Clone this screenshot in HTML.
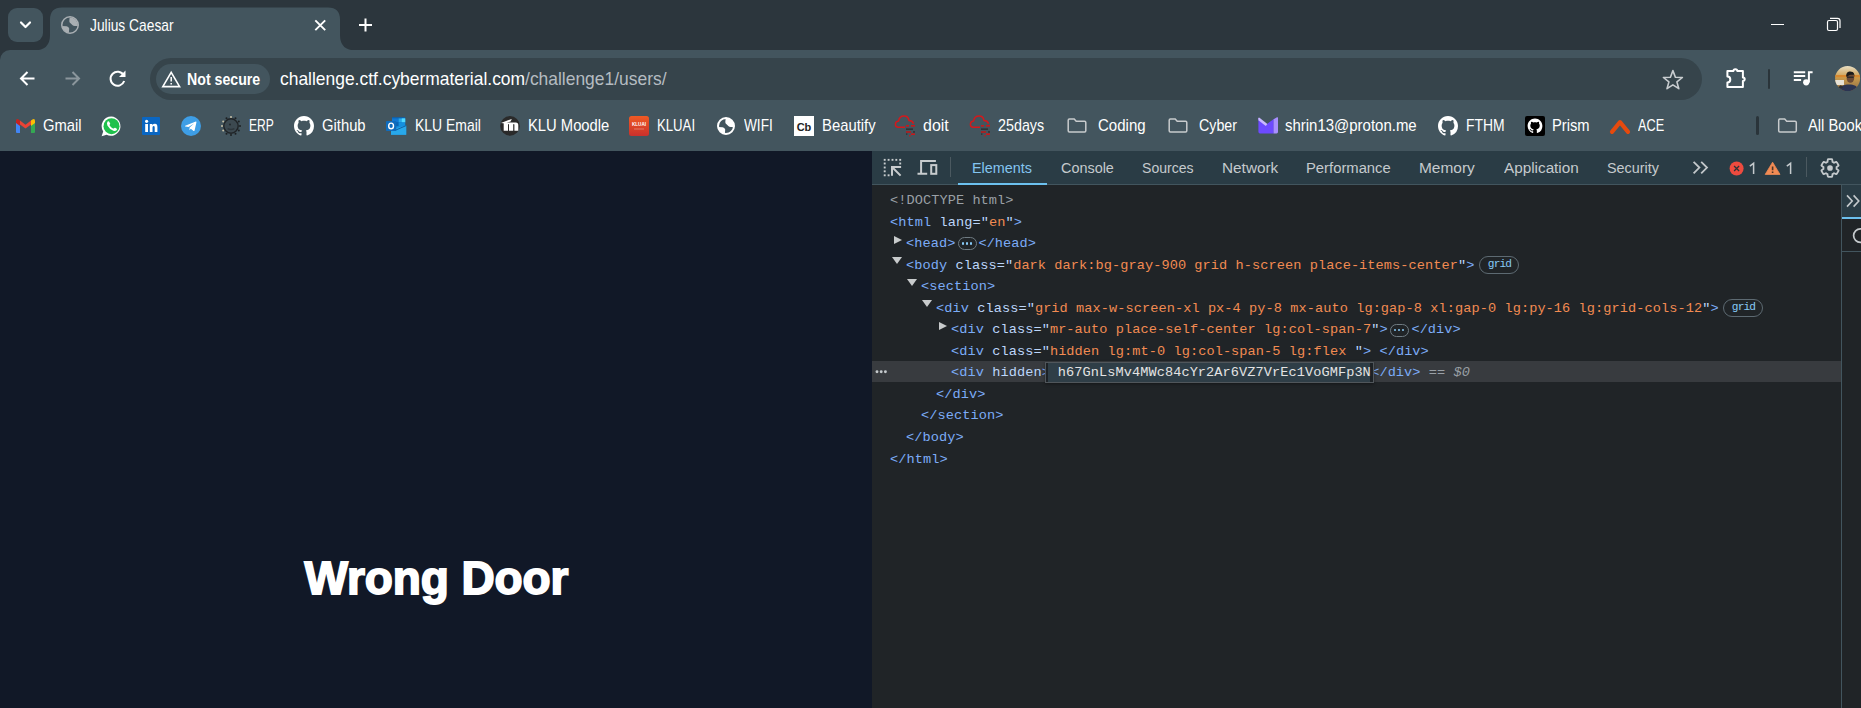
<!DOCTYPE html>
<html><head><meta charset="utf-8"><title>Julius Caesar</title>
<style>
*{box-sizing:border-box;margin:0;padding:0}
html,body{width:1861px;height:708px;overflow:hidden}
body{position:relative;background:#2c363d;font-family:"Liberation Sans",sans-serif;color:#fff}
.a{position:absolute}
.t{position:absolute;white-space:nowrap;line-height:1}
svg{position:absolute;overflow:visible}
.code{position:absolute;font-family:"Liberation Mono",monospace;font-size:13.6px;letter-spacing:0.08px;line-height:21.65px;white-space:pre}
.tg{color:#7cacf8}.an{color:#bcd6fa}.av{color:#f28b52}.gr{color:#9aa0a6}.tx{color:#e3e3e3}
.tri{position:absolute;width:0;height:0}
.tr{border-left:8.3px solid #c8cbcc;border-top:4.9px solid transparent;border-bottom:4.9px solid transparent}
.td{border-top:7.2px solid #c8cbcc;border-left:5px solid transparent;border-right:5px solid transparent}
.badge{position:absolute;height:18px;border:1px solid #5d6a72;border-radius:9px;color:#87c9f5;font-family:"Liberation Mono",monospace;font-size:11.2px;letter-spacing:-0.9px;line-height:15px;text-align:center;padding-left:1px}
.ell{position:absolute;width:19px;height:13px;border:1px solid #6f7b82;border-radius:7px}
.ell i{position:absolute;top:4px;width:2.4px;height:2.4px;border-radius:50%;background:#87c9f5}
</style></head><body>
<div class="a" style="left:8px;top:8px;width:35px;height:34px;background:#43555e;border-radius:9px"></div>
<svg style="left:0;top:0" width="40" height="40"><polyline points="21,22.5 25.5,27 30,22.5" fill="none" stroke="#fff" stroke-width="2.2" stroke-linecap="round" stroke-linejoin="round"/></svg>
<svg style="left:0;top:0" width="400" height="60"><path d="M34 50.5 Q50 50.5 50 35 L50 19.5 Q50 7.4 62 7.4 L328 7.4 Q340 7.4 340 19.5 L340 35 Q340 50.5 356 50.5 Z" fill="#43555e"/></svg>
<svg style="left:61px;top:16px" width="18" height="18" viewBox="0 0 18 18"><circle cx="9" cy="9" r="8.25" fill="#43555e" stroke="#a9afb3" stroke-width="1.5"/><path d="M8.6 1.4 L8.3 5.2 Q8.3 6.8 9.8 7.5 L11.3 8.9 Q12.3 9.9 13.8 9.9 L16.8 9.9 A7.9 7.9 0 0 0 8.6 1.4 Z" fill="#a9afb3"/><path d="M1.2 10.1 L5.6 10.2 Q7.6 10.6 8.2 12.6 L7.9 16.8 A7.9 7.9 0 0 1 1.2 10.1 Z" fill="#a9afb3"/></svg>
<div class="t" style="left:90px;top:17.19px;font-size:16.2px;color:#fff;font-weight:normal;transform:scaleX(0.852);transform-origin:0 0;">Julius Caesar</div>
<svg style="left:0;top:0" width="400" height="40"><path d="M315.3 20.3 L325.2 30.2 M325.2 20.3 L315.3 30.2" stroke="#fff" stroke-width="1.9"/><path d="M365.5 18.5 V31.5 M359 25 H372" stroke="#fff" stroke-width="2"/></svg>
<div class="a" style="left:1771px;top:24px;width:13px;height:1px;background:#fff"></div>
<svg style="left:1820px;top:12px" width="30" height="30"><rect x="7.5" y="8.5" width="10" height="10" rx="1.5" fill="none" stroke="#fff" stroke-width="1.2"/><path d="M10 6.3 H17.5 Q20 6.3 20 8.8 V16" fill="none" stroke="#fff" stroke-width="1.2"/></svg>
<div class="a" style="left:0;top:50px;width:1861px;height:101px;background:#43555e;border-top-left-radius:10px"></div>
<svg style="left:0;top:60px" width="140" height="40"><path d="M34.5 18.5 H21 M27.5 12 L21 18.5 L27.5 25" fill="none" stroke="#fff" stroke-width="2"/><path d="M65.5 18.5 H79 M72.5 12 L79 18.5 L72.5 25" fill="none" stroke="#8b969c" stroke-width="2"/><path d="M123.6 15.2 A7 7 0 1 0 124.2 21" fill="none" stroke="#fff" stroke-width="2"/><path d="M125.5 10.5 V17 H119 Z" fill="#fff"/></svg>
<div class="a" style="left:150px;top:58px;width:1552px;height:42px;background:#36444b;border-radius:21px"></div>
<div class="a" style="left:156px;top:64px;width:114px;height:30px;background:#43555e;border-radius:15px"></div>
<svg style="left:160px;top:68px" width="24" height="22"><path d="M11.2 4.3 L19.6 18.6 H2.8 Z" fill="none" stroke="#fff" stroke-width="1.6" stroke-linejoin="miter"/><path d="M11.2 9 V13.6 M11.2 15 V16.6" stroke="#fff" stroke-width="1.5"/></svg>
<div class="t" style="left:186.6px;top:70.59px;font-size:16.2px;color:#fff;font-weight:bold;transform:scaleX(0.875);transform-origin:0 0;">Not secure</div>
<div class="t" style="left:280px;top:70.14px;font-size:18.5px;color:#fff;font-weight:normal;transform:scaleX(0.942);transform-origin:0 0;">challenge.ctf.cybermaterial.com<span style="color:#b5bcc1">/challenge1/users/</span></div>
<svg style="left:1660px;top:67px" width="26" height="26" viewBox="0 0 26 26"><path d="M12.9 3.6 L15.4 10.2 L22.4 10.5 L16.9 14.9 L18.8 21.7 L12.9 17.8 L7 21.7 L8.9 14.9 L3.4 10.5 L10.4 10.2 Z" fill="none" stroke="#c9cdd0" stroke-width="1.6" stroke-linejoin="round"/></svg>
<svg style="left:1720px;top:62px" width="40" height="34"><path d="M7.4 9.1 H13.4 A1.95 1.95 0 0 1 17.3 9.1 H22.9 V15.4 A1.8 1.8 0 0 1 22.9 19 V25.1 H7.4 V20.4 A2.9 2.9 0 0 0 7.4 14.6 Z" fill="none" stroke="#fff" stroke-width="2" stroke-linejoin="round"/></svg>
<div class="a" style="left:1768px;top:69px;width:2px;height:20px;background:#2a343a;border-radius:1px"></div>
<svg style="left:1780px;top:62px" width="40" height="34"><path d="M13.8 10.2 H25.2 M13.8 14 H25.2 M13.8 18 H21.1" stroke="#fff" stroke-width="2"/><path d="M28.9 20.4 V10.3 H32.6" fill="none" stroke="#fff" stroke-width="2"/><circle cx="26.2" cy="20.3" r="3.1" fill="#fff"/></svg>
<svg style="left:1835px;top:66px" width="26" height="26" viewBox="0 0 26 26"><defs><clipPath id="av"><circle cx="12.6" cy="12.6" r="12.5"/></clipPath><linearGradient id="avg" x1="0" y1="0" x2="0" y2="1"><stop offset="0" stop-color="#e9dfc4"/><stop offset="0.45" stop-color="#c99a4a"/><stop offset="1" stop-color="#8a6a48"/></linearGradient></defs><g clip-path="url(#av)"><rect width="26" height="26" fill="url(#avg)"/><rect y="9" width="26" height="2.2" fill="#d8882e"/><rect x="0" y="14" width="9" height="5" fill="#e8e2d6"/><path d="M3 26 C4 20 9 18.5 14 18.5 C19 18.5 23 20 25 26 Z" fill="#2b3452"/><path d="M2 22 L6 19 L8 22 Z" fill="#303030"/><ellipse cx="15.4" cy="12" rx="3.8" ry="4.8" fill="#6a4a36"/><path d="M11.2 10 C11 5.6 15 4.6 17.6 6 C19.6 7.2 19.6 9.6 19.2 11 L18.6 8.8 C16 8.6 13.6 8.6 11.8 11 Z" fill="#1a1a1a"/><rect x="12" y="10.6" width="6.6" height="1.3" fill="#2a2a2a"/></g></svg>
<svg style="left:16px;top:119px" width="19" height="14" viewBox="0 0 19 14"><path d="M0 2 V13 Q0 14 1 14 H4 V5.5 Z" fill="#4285f4"/><path d="M19 2 V13 Q19 14 18 14 H15 V5.5 Z" fill="#34a853"/><path d="M4 5.5 L9.5 9.6 L15 5.5 V1.6 L9.5 5.7 L4 1.6 Z" fill="#ea4335"/><path d="M15 1.6 L16.4 0.5 Q19 -0.8 19 2 V4 L15 7 Z" fill="#fbbc04"/><path d="M4 1.6 L2.6 0.5 Q0 -0.8 0 2 V4 L4 7 Z" fill="#c5221f"/></svg>
<div class="t" style="left:43px;top:117.37px;font-size:16.1px;color:#fff;font-weight:normal;transform:scaleX(0.9194099378881987);transform-origin:0 0;">Gmail</div>
<svg style="left:101px;top:116px" width="21" height="21" viewBox="0 0 21 21"><path d="M10.4 0.6 A9.6 9.6 0 1 1 5.6 18.8 L0.6 20.2 L2.2 15.4 A9.6 9.6 0 0 1 10.4 0.6 Z" fill="#fff"/><circle cx="10.5" cy="10.2" r="8" fill="#1fc14c"/><path d="M6.6 5.6 Q7.4 5 8 5.4 L9.2 7.6 Q9.4 8.2 8.6 8.8 Q8.4 9.2 9 10 Q10.4 11.8 12 12.4 Q12.6 12.6 13 12.2 Q13.6 11.4 14.2 11.8 L15.8 12.8 Q16.2 13.4 15.6 14.2 Q14.4 15.4 12.4 14.8 Q8.6 13.6 6.4 9.6 Q5.4 7 6.6 5.6 Z" fill="#fff"/></svg>
<svg style="left:142px;top:117px" width="18" height="18" viewBox="0 0 18 18"><rect width="18" height="18" rx="1" fill="#0a66c2"/><rect x="3.2" y="7" width="2.8" height="8" fill="#fff"/><circle cx="4.6" cy="4.3" r="1.6" fill="#fff"/><path d="M7.8 7 H10.4 V8.2 Q11.2 6.8 13 6.8 Q15.4 6.8 15.4 9.8 V15 H12.7 V10.4 Q12.7 9 11.6 9 Q10.5 9 10.5 10.6 V15 H7.8 Z" fill="#fff"/></svg>
<svg style="left:181px;top:116px" width="20" height="20" viewBox="0 0 20 20"><circle cx="10" cy="10" r="10" fill="#3e9ee6"/><path d="M4.2 9.8 L14.8 5.6 Q15.6 5.4 15.4 6.4 L13.6 14.6 Q13.4 15.4 12.6 14.9 L9.8 12.8 L8.4 14.2 L8.6 11.6 L13 7.6 L7.6 11 L4.4 10.6 Q3.6 10.2 4.2 9.8 Z" fill="#fff"/></svg>
<svg style="left:221px;top:116px" width="20" height="20" viewBox="0 0 20 20"><circle cx="10.00" cy="1.00" r="1" fill="#c9c2a8"/><circle cx="14.50" cy="2.21" r="1" fill="#1d2022"/><circle cx="17.79" cy="5.50" r="1" fill="#1d2022"/><circle cx="19.00" cy="10.00" r="1" fill="#1d2022"/><circle cx="17.79" cy="14.50" r="1" fill="#1d2022"/><circle cx="14.50" cy="17.79" r="1" fill="#1d2022"/><circle cx="10.00" cy="19.00" r="1" fill="#1d2022"/><circle cx="5.50" cy="17.79" r="1" fill="#1d2022"/><circle cx="2.21" cy="14.50" r="1" fill="#c9c2a8"/><circle cx="1.00" cy="10.00" r="1" fill="#c9c2a8"/><circle cx="2.21" cy="5.50" r="1" fill="#c9c2a8"/><circle cx="5.50" cy="2.21" r="1" fill="#1d2022"/><circle cx="10" cy="10" r="7.2" fill="#3c4950" stroke="#202427" stroke-width="1.4"/><circle cx="9" cy="8.4" r="1" fill="#22282b"/><path d="M6.6 12.6 Q10 14.4 13.4 12.6" stroke="#2d363b" stroke-width="1.6" fill="none"/></svg>
<div class="t" style="left:249px;top:117.37px;font-size:16.1px;color:#fff;font-weight:normal;transform:scaleX(0.7509);transform-origin:0 0;">ERP</div>
<svg style="left:294px;top:116px" width="20" height="20" viewBox="0 0 16 16"><path d="M8 0C3.58 0 0 3.58 0 8c0 3.54 2.29 6.53 5.47 7.59.4.07.55-.17.55-.38 0-.19-.01-.82-.01-1.49-2.01.37-2.53-.49-2.69-.94-.09-.23-.48-.94-.82-1.13-.28-.15-.68-.52-.01-.53.63-.01 1.08.58 1.23.82.72 1.21 1.87.87 2.33.66.07-.52.28-.87.51-1.07-1.78-.2-3.64-.89-3.64-3.95 0-.87.31-1.59.82-2.15-.08-.2-.36-1.02.08-2.12 0 0 .67-.21 2.2.82.64-.18 1.32-.27 2-.27.68 0 1.36.09 2 .27 1.53-1.04 2.2-.82 2.2-.82.44 1.1.16 1.92.08 2.12.51.56.82 1.27.82 2.15 0 3.07-1.87 3.75-3.65 3.95.29.25.54.73.54 1.48 0 1.07-.01 1.93-.01 2.2 0 .21.15.46.55.38A8.013 8.013 0 0016 8c0-4.42-3.58-8-8-8z" fill="#fff"/></svg>
<div class="t" style="left:322px;top:117.37px;font-size:16.1px;color:#fff;font-weight:normal;transform:scaleX(0.9194099378881987);transform-origin:0 0;">Github</div>
<svg style="left:386px;top:117px" width="21" height="18" viewBox="0 0 21 18"><rect x="6" y="0.2" width="13.2" height="9.4" fill="#0a64b4"/><rect x="6" y="1.4" width="6.6" height="4" fill="#0f78d4"/><rect x="12.6" y="1.4" width="6.6" height="4" fill="#28a8ea"/><rect x="15.8" y="1.4" width="3.4" height="4" fill="#50d9ff"/><rect x="6" y="5.4" width="6.6" height="4.2" fill="#0a64b4"/><rect x="12.6" y="5.4" width="6.6" height="4.2" fill="#1490df"/><path d="M5 9.8 L20.2 8.6 V17.7 H5 Z" fill="#1490df"/><path d="M5 12.6 L20.2 8.6 V17.7 H5 Z" fill="#28a8ea"/><path d="M9 13.4 L20.2 8.6" stroke="#0a4f94" stroke-width="0.8"/><rect x="0" y="3.9" width="10.3" height="10.1" rx="0.8" fill="#0f6cbd"/><ellipse cx="5.1" cy="8.9" rx="2.4" ry="2.8" fill="none" stroke="#fff" stroke-width="1.4"/></svg>
<div class="t" style="left:415px;top:117.37px;font-size:16.1px;color:#fff;font-weight:normal;transform:scaleX(0.8665);transform-origin:0 0;">KLU Email</div>
<svg style="left:500px;top:116px" width="20" height="20" viewBox="0 0 20 20"><circle cx="10" cy="9.9" r="9.8" fill="#2a2a2a"/><path d="M3.7 14.8 V7.2 Q3.7 6.6 4.4 6.6 H15.8 Q18.3 6.6 18.3 9.2 V14.8 H14.4 V8.8 Q14.4 8 13.8 8 Q13.2 8 13.2 8.8 V14.8 H9 V8.8 Q9 8 8.5 8 Q8 8 8 8.8 V14.8 Z" fill="#fff"/><path d="M0.9 7 L11.8 2.9 L10.6 5.4 L5.2 7.4 Z" fill="#fff"/></svg>
<div class="t" style="left:528px;top:117.37px;font-size:16.1px;color:#fff;font-weight:normal;transform:scaleX(0.9175);transform-origin:0 0;">KLU Moodle</div>
<svg style="left:629px;top:116px" width="20" height="20" viewBox="0 0 20 20"><defs><linearGradient id="kl" x1="0" y1="0" x2="0" y2="1"><stop offset="0" stop-color="#ef5a24"/><stop offset="1" stop-color="#c9302c"/></linearGradient></defs><rect width="20" height="20" rx="2.5" fill="url(#kl)"/><text x="10" y="9.6" font-family="Liberation Sans" font-size="4.6" font-weight="bold" fill="#fff" text-anchor="middle">KLUAI</text><path d="M5 13 H15" stroke="#f3b5a0" stroke-width="0.5"/></svg>
<div class="t" style="left:657px;top:117.37px;font-size:16.1px;color:#fff;font-weight:normal;transform:scaleX(0.8183);transform-origin:0 0;">KLUAI</div>
<svg style="left:717px;top:117px" width="18" height="18" viewBox="0 0 18 18"><circle cx="9" cy="9" r="8.0" fill="#43555e" stroke="#fff" stroke-width="2"/><path d="M8.6 1.4 L8.3 5.2 Q8.3 6.8 9.8 7.5 L11.3 8.9 Q12.3 9.9 13.8 9.9 L16.8 9.9 A7.9 7.9 0 0 0 8.6 1.4 Z" fill="#fff"/><path d="M1.2 10.1 L5.6 10.2 Q7.6 10.6 8.2 12.6 L7.9 16.8 A7.9 7.9 0 0 1 1.2 10.1 Z" fill="#fff"/></svg>
<div class="t" style="left:744px;top:117.37px;font-size:16.1px;color:#fff;font-weight:normal;transform:scaleX(0.8472);transform-origin:0 0;">WIFI</div>
<svg style="left:794px;top:116px" width="20" height="20" viewBox="0 0 20 20"><rect width="20" height="20" fill="#fff"/><text x="10" y="14.6" font-family="Liberation Sans" font-size="11" font-weight="bold" fill="#222" text-anchor="middle">Cb</text></svg>
<div class="t" style="left:822px;top:117.37px;font-size:16.1px;color:#fff;font-weight:normal;transform:scaleX(0.9223);transform-origin:0 0;">Beautify</div>
<svg style="left:890px;top:112px" width="30" height="28"><path d="M15 15.2 H8.2 Q5.4 15.2 5.4 12.2 Q5.4 9.2 8.6 8.9 Q9.4 4 14 4 Q18.4 4 19 8.6 Q22.4 8.6 23.6 11.6" fill="none" stroke="#d3191c" stroke-width="1.5"/><rect x="16" y="13" width="3" height="1.6" fill="#c8181b"/><rect x="21" y="13" width="4" height="1.6" fill="#c8181b"/><rect x="16" y="16.4" width="7" height="1.5" fill="#2f3336"/><rect x="16" y="19.2" width="5" height="1.6" fill="#b8191b"/><rect x="23" y="19.2" width="2" height="1.5" fill="#2f3336"/><rect x="16" y="21.4" width="1.4" height="1.4" fill="#2f3336"/><rect x="21" y="21.4" width="4" height="1.6" fill="#c8181b"/><rect x="19" y="23.2" width="1.6" height="1.2" fill="#c8181b"/></svg>
<div class="t" style="left:923px;top:117.37px;font-size:16.1px;color:#fff;font-weight:normal;transform:scaleX(0.9916);transform-origin:0 0;">doit</div>
<svg style="left:965px;top:112px" width="30" height="28"><path d="M15 15.2 H8.2 Q5.4 15.2 5.4 12.2 Q5.4 9.2 8.6 8.9 Q9.4 4 14 4 Q18.4 4 19 8.6 Q22.4 8.6 23.6 11.6" fill="none" stroke="#d3191c" stroke-width="1.5"/><rect x="16" y="13" width="3" height="1.6" fill="#c8181b"/><rect x="21" y="13" width="4" height="1.6" fill="#c8181b"/><rect x="16" y="16.4" width="7" height="1.5" fill="#2f3336"/><rect x="16" y="19.2" width="5" height="1.6" fill="#b8191b"/><rect x="23" y="19.2" width="2" height="1.5" fill="#2f3336"/><rect x="16" y="21.4" width="1.4" height="1.4" fill="#2f3336"/><rect x="21" y="21.4" width="4" height="1.6" fill="#c8181b"/><rect x="19" y="23.2" width="1.6" height="1.2" fill="#c8181b"/></svg>
<div class="t" style="left:998px;top:117.37px;font-size:16.1px;color:#fff;font-weight:normal;transform:scaleX(0.8896);transform-origin:0 0;">25days</div>
<svg style="left:1067px;top:118px" width="20" height="15" viewBox="0 0 20 15"><path d="M1.2 2.2 Q1.2 1 2.4 1 H7.2 L9.2 3.2 H17.6 Q18.8 3.2 18.8 4.4 V12.8 Q18.8 14 17.6 14 H2.4 Q1.2 14 1.2 12.8 Z" fill="none" stroke="#c8cbcd" stroke-width="1.5"/></svg>
<div class="t" style="left:1097.5px;top:117.37px;font-size:16.1px;color:#fff;font-weight:normal;transform:scaleX(0.9329);transform-origin:0 0;">Coding</div>
<svg style="left:1168px;top:118px" width="20" height="15" viewBox="0 0 20 15"><path d="M1.2 2.2 Q1.2 1 2.4 1 H7.2 L9.2 3.2 H17.6 Q18.8 3.2 18.8 4.4 V12.8 Q18.8 14 17.6 14 H2.4 Q1.2 14 1.2 12.8 Z" fill="none" stroke="#c8cbcd" stroke-width="1.5"/></svg>
<div class="t" style="left:1199px;top:117.37px;font-size:16.1px;color:#fff;font-weight:normal;transform:scaleX(0.8848);transform-origin:0 0;">Cyber</div>
<svg style="left:1258px;top:117px" width="20" height="17" viewBox="0 0 20 17"><path d="M0.4 1 L8 7.8 L15.8 2 V16.4 H2 Q0.4 16.4 0.4 14.8 Z" fill="#6d4aff"/><path d="M0.4 1.2 Q0.6 0.2 1.8 0.9 L9.4 7 L7.8 9 L0.4 3.2 Z" fill="#c9b8ff"/><path d="M15.6 2.2 L19 0.3 Q20 -0.1 20 1.1 V15 Q20 16.4 18.6 16.4 H15.6 Z" fill="#a88fff"/></svg>
<div class="t" style="left:1285px;top:117.37px;font-size:16.1px;color:#fff;font-weight:normal;transform:scaleX(0.93);transform-origin:0 0;">shrin13@proton.me</div>
<svg style="left:1438px;top:116px" width="20" height="20" viewBox="0 0 16 16"><path d="M8 0C3.58 0 0 3.58 0 8c0 3.54 2.29 6.53 5.47 7.59.4.07.55-.17.55-.38 0-.19-.01-.82-.01-1.49-2.01.37-2.53-.49-2.69-.94-.09-.23-.48-.94-.82-1.13-.28-.15-.68-.52-.01-.53.63-.01 1.08.58 1.23.82.72 1.21 1.87.87 2.33.66.07-.52.28-.87.51-1.07-1.78-.2-3.64-.89-3.64-3.95 0-.87.31-1.59.82-2.15-.08-.2-.36-1.02.08-2.12 0 0 .67-.21 2.2.82.64-.18 1.32-.27 2-.27.68 0 1.36.09 2 .27 1.53-1.04 2.2-.82 2.2-.82.44 1.1.16 1.92.08 2.12.51.56.82 1.27.82 2.15 0 3.07-1.87 3.75-3.65 3.95.29.25.54.73.54 1.48 0 1.07-.01 1.93-.01 2.2 0 .21.15.46.55.38A8.013 8.013 0 0016 8c0-4.42-3.58-8-8-8z" fill="#fff"/></svg>
<div class="t" style="left:1466px;top:117.37px;font-size:16.1px;color:#fff;font-weight:normal;transform:scaleX(0.8626);transform-origin:0 0;">FTHM</div>
<svg style="left:1525px;top:116px" width="20" height="20" viewBox="0 0 20 20"><rect width="20" height="20" rx="2" fill="#000"/><g transform="translate(2.6 2.6) scale(0.925)"><path d="M8 0C3.58 0 0 3.58 0 8c0 3.54 2.29 6.53 5.47 7.59.4.07.55-.17.55-.38 0-.19-.01-.82-.01-1.49-2.01.37-2.53-.49-2.69-.94-.09-.23-.48-.94-.82-1.13-.28-.15-.68-.52-.01-.53.63-.01 1.08.58 1.23.82.72 1.21 1.87.87 2.33.66.07-.52.28-.87.51-1.07-1.78-.2-3.64-.89-3.64-3.95 0-.87.31-1.59.82-2.15-.08-.2-.36-1.02.08-2.12 0 0 .67-.21 2.2.82.64-.18 1.32-.27 2-.27.68 0 1.36.09 2 .27 1.53-1.04 2.2-.82 2.2-.82.44 1.1.16 1.92.08 2.12.51.56.82 1.27.82 2.15 0 3.07-1.87 3.75-3.65 3.95.29.25.54.73.54 1.48 0 1.07-.01 1.93-.01 2.2 0 .21.15.46.55.38A8.013 8.013 0 0016 8c0-4.42-3.58-8-8-8z" fill="#fff"/></g></svg>
<div class="t" style="left:1552px;top:117.37px;font-size:16.1px;color:#fff;font-weight:normal;transform:scaleX(0.9146);transform-origin:0 0;">Prism</div>
<svg style="left:1609px;top:117px" width="22" height="18" viewBox="0 0 22 18"><path d="M3 14.8 L11 5.2 L19 14.8" fill="none" stroke="#e64a0e" stroke-width="4.2" stroke-linecap="round" stroke-linejoin="round"/></svg>
<div class="t" style="left:1638px;top:117.37px;font-size:16.1px;color:#fff;font-weight:normal;transform:scaleX(0.7894);transform-origin:0 0;">ACE</div>
<div class="a" style="left:1756px;top:116px;width:3px;height:19px;background:#2a343a;border-radius:1.5px"></div>
<svg style="left:1777px;top:118px" width="21" height="15" viewBox="0 0 20 15"><path d="M1.2 2.2 Q1.2 1 2.4 1 H7.2 L9.2 3.2 H17.6 Q18.8 3.2 18.8 4.4 V12.8 Q18.8 14 17.6 14 H2.4 Q1.2 14 1.2 12.8 Z" fill="none" stroke="#c8cbcd" stroke-width="1.5"/></svg>
<div class="t" style="left:1808px;top:117.37px;font-size:16.1px;color:#fff;font-weight:normal;transform:scaleX(0.9146);transform-origin:0 0;">All Bookmarks</div>
<div class="a" style="left:0;top:151px;width:872px;height:557px;background:#111827"></div>
<div class="t" style="left:304.5px;top:554.66px;font-size:46px;color:#fff;font-weight:bold;letter-spacing:-0.1px;-webkit-text-stroke:1.8px #fff">Wrong Door</div>
<div class="a" style="left:872px;top:151px;width:989px;height:557px;background:#202427"></div>
<div class="a" style="left:872px;top:151px;width:989px;height:33px;background:#2a3c45"></div>
<div class="a" style="left:872px;top:184px;width:989px;height:1px;background:#42555e"></div>
<svg style="left:878px;top:154px" width="66" height="28"><rect x="5.75" y="4.90" width="1.9" height="1.9" fill="#c8ccce"/><rect x="9.65" y="4.90" width="1.9" height="1.9" fill="#c8ccce"/><rect x="13.55" y="4.90" width="1.9" height="1.9" fill="#c8ccce"/><rect x="17.35" y="4.90" width="1.9" height="1.9" fill="#c8ccce"/><rect x="21.25" y="4.90" width="1.9" height="1.9" fill="#c8ccce"/><rect x="5.75" y="8.55" width="1.9" height="1.9" fill="#c8ccce"/><rect x="5.75" y="12.55" width="1.9" height="1.9" fill="#c8ccce"/><rect x="5.75" y="16.35" width="1.9" height="1.9" fill="#c8ccce"/><rect x="5.75" y="20.35" width="1.9" height="1.9" fill="#c8ccce"/><rect x="21.25" y="8.55" width="1.9" height="1.9" fill="#c8ccce"/><rect x="9.65" y="20.35" width="1.9" height="1.9" fill="#c8ccce"/><path d="M13 13 H23.1 M14 12 V21.7 M14 13 L22.6 21.6" fill="none" stroke="#c8ccce" stroke-width="2"/><path d="M43.1 19.8 V6.9 H57.9 M39.5 19.8 H49.2" fill="none" stroke="#c8ccce" stroke-width="2"/><rect x="53.2" y="11.1" width="5.1" height="8.7" fill="none" stroke="#c8ccce" stroke-width="2"/></svg>
<div class="a" style="left:950px;top:157px;width:1px;height:20px;background:#4b5960"></div>
<div class="t" style="left:972.4px;top:159.98px;font-size:15.5px;color:#84c5f0;font-weight:normal;transform:scaleX(0.927);transform-origin:0 0;">Elements</div>
<div class="a" style="left:958px;top:182.5px;width:89px;height:2.5px;background:#6cc0ee"></div>
<div class="t" style="left:1061px;top:159.98px;font-size:15.5px;color:#c5cacd;font-weight:normal;transform:scaleX(0.93);transform-origin:0 0;">Console</div>
<div class="t" style="left:1142px;top:159.98px;font-size:15.5px;color:#c5cacd;font-weight:normal;transform:scaleX(0.907);transform-origin:0 0;">Sources</div>
<div class="t" style="left:1221.5px;top:159.98px;font-size:15.5px;color:#c5cacd;font-weight:normal;transform:scaleX(0.99);transform-origin:0 0;">Network</div>
<div class="t" style="left:1306px;top:159.98px;font-size:15.5px;color:#c5cacd;font-weight:normal;transform:scaleX(0.955);transform-origin:0 0;">Performance</div>
<div class="t" style="left:1419px;top:159.98px;font-size:15.5px;color:#c5cacd;font-weight:normal;transform:scaleX(0.996);transform-origin:0 0;">Memory</div>
<div class="t" style="left:1503.5px;top:159.98px;font-size:15.5px;color:#c5cacd;font-weight:normal;transform:scaleX(0.986);transform-origin:0 0;">Application</div>
<div class="t" style="left:1607px;top:159.98px;font-size:15.5px;color:#c5cacd;font-weight:normal;transform:scaleX(0.926);transform-origin:0 0;">Security</div>
<svg style="left:1690px;top:158px" width="22" height="20"><path d="M3.6 3.8 L9.4 9.6 L3.6 15.4 M11.2 3.8 L17 9.6 L11.2 15.4" fill="none" stroke="#c2c7ca" stroke-width="1.8"/></svg>
<svg style="left:1726px;top:158px" width="20" height="20"><circle cx="10.6" cy="10.5" r="7" fill="#ee4b3f"/><path d="M8.1 8 L13.1 13 M13.1 8 L8.1 13" stroke="#2e3236" stroke-width="1.3"/></svg>
<svg style="left:1745px;top:160px" width="14" height="18"><path d="M4.8 6.2 L8.6 3.3 V14.1" fill="none" stroke="#c5cacd" stroke-width="1.5"/></svg>
<svg style="left:1762px;top:158px" width="22" height="20"><path d="M10.6 4.2 L18 16.4 H3.2 Z" fill="#f28b54" stroke="#f28b54" stroke-width="0.8" stroke-linejoin="round"/><path d="M10.6 8.4 V12.2 M10.6 13.4 V15" stroke="#4a3426" stroke-width="1.6"/></svg>
<svg style="left:1782px;top:160px" width="14" height="18"><path d="M4.8 6.2 L8.6 3.3 V14.1" fill="none" stroke="#c5cacd" stroke-width="1.5"/></svg>
<div class="a" style="left:1806px;top:157px;width:1px;height:20px;background:#4b5960"></div>
<svg style="left:1819px;top:157px" width="22" height="22" viewBox="0 0 24 24"><path d="M19.14 12.94c.04-.3.06-.61.06-.94 0-.32-.02-.64-.07-.94l2.03-1.58c.18-.14.23-.41.12-.61l-1.92-3.32c-.12-.22-.37-.29-.59-.22l-2.39.96c-.5-.38-1.03-.7-1.62-.94l-.36-2.54c-.04-.24-.24-.41-.48-.41h-3.84c-.24 0-.43.17-.47.41l-.36 2.54c-.59.24-1.13.57-1.62.94l-2.39-.96c-.22-.08-.47 0-.59.22L2.74 8.87c-.12.21-.08.47.12.61l2.03 1.58c-.05.3-.09.63-.09.94s.02.64.07.94l-2.03 1.58c-.18.14-.23.41-.12.61l1.92 3.32c.12.22.37.29.59.22l2.39-.96c.5.38 1.03.7 1.62.94l.36 2.54c.05.24.24.41.48.41h3.84c.24 0 .44-.17.47-.41l.36-2.54c.59-.24 1.13-.56 1.62-.94l2.39.96c.22.08.47 0 .59-.22l1.92-3.32c.12-.22.07-.47-.12-.61l-2.01-1.58z" fill="none" stroke="#c5cacd" stroke-width="2"/><circle cx="12" cy="12" r="3.1" fill="#c5cacd"/></svg>
<div class="a" style="left:1841px;top:185px;width:1px;height:523px;background:#42555e"></div>
<div class="a" style="left:1842px;top:185px;width:19px;height:32px;background:#2a3c45"></div>
<div class="a" style="left:1842px;top:216.5px;width:19px;height:2.5px;background:#6cc0ee"></div>
<svg style="left:1842px;top:190px" width="19" height="22"><path d="M5 5.4 L10.2 11 L5 16.6 M11.6 5.4 L16.8 11 L11.6 16.6" fill="none" stroke="#c5cacd" stroke-width="1.6"/></svg>
<svg style="left:1842px;top:222px" width="19" height="28"><circle cx="18.4" cy="13.6" r="6.8" fill="none" stroke="#c5cacd" stroke-width="1.7"/></svg>
<div class="a" style="left:1842px;top:251px;width:19px;height:1px;background:#42555e"></div>
<div class="a" style="left:872px;top:361.00px;width:969px;height:21.0px;background:#383b3f"></div>
<svg style="left:874px;top:367.55px" width="16" height="8"><circle cx="3" cy="3.8" r="1.45" fill="#c5cacd"/><circle cx="7.2" cy="3.8" r="1.45" fill="#c5cacd"/><circle cx="11.4" cy="3.8" r="1.45" fill="#c5cacd"/></svg>
<div class="code" style="left:890px;top:189.95px"><span class="gr">&lt;!DOCTYPE html&gt;</span></div>
<div class="code" style="left:890px;top:211.50px"><span class="tg">&lt;html</span> <span class="an">lang</span><span class="an">=&quot;</span><span class="av">en</span><span class="an">&quot;</span><span class="tg">&gt;</span></div>
<div class="tri tr" style="left:893.5px;top:236.22px"></div>
<div class="code" style="left:906px;top:233.05px"><span class="tg">&lt;head&gt;</span></div>
<div class="ell" style="left:957.5px;top:237.32px"><i style="left:3.6px"></i><i style="left:7.3px"></i><i style="left:11px"></i></div>
<div class="code" style="left:978.4px;top:233.05px"><span class="tg">&lt;/head&gt;</span></div>
<div class="tri td" style="left:892px;top:257.18px"></div>
<div class="code" style="left:906px;top:254.60px"><span class="tg">&lt;body</span> <span class="an">class</span><span class="an">=&quot;</span><span class="av">dark dark:bg-gray-900 grid h-screen place-items-center</span><span class="an">&quot;</span><span class="tg">&gt;</span></div>
<div class="badge" style="left:1479px;top:256.38px;width:40px">grid</div>
<div class="tri td" style="left:907px;top:278.72px"></div>
<div class="code" style="left:921px;top:276.15px"><span class="tg">&lt;section&gt;</span></div>
<div class="tri td" style="left:922px;top:300.27px"></div>
<div class="code" style="left:936px;top:297.70px"><span class="tg">&lt;div</span> <span class="an">class</span><span class="an">=&quot;</span><span class="av">grid max-w-screen-xl px-4 py-8 mx-auto lg:gap-8 xl:gap-0 lg:py-16 lg:grid-cols-12</span><span class="an">&quot;</span><span class="tg">&gt;</span></div>
<div class="badge" style="left:1723px;top:299.47px;width:40px">grid</div>
<div class="tri tr" style="left:938.5px;top:322.42px"></div>
<div class="code" style="left:951px;top:319.25px"><span class="tg">&lt;div</span> <span class="an">class</span><span class="an">=&quot;</span><span class="av">mr-auto place-self-center lg:col-span-7</span><span class="an">&quot;</span><span class="tg">&gt;</span></div>
<div class="ell" style="left:1389.5px;top:323.52px"><i style="left:3.6px"></i><i style="left:7.3px"></i><i style="left:11px"></i></div>
<div class="code" style="left:1411.4px;top:319.25px"><span class="tg">&lt;/div&gt;</span></div>
<div class="code" style="left:951px;top:340.80px"><span class="tg">&lt;div</span> <span class="an">class</span><span class="an">=&quot;</span><span class="av">hidden lg:mt-0 lg:col-span-5 lg:flex </span><span class="an">&quot;</span><span class="tg">&gt; &lt;/div&gt;</span></div>
<div class="code" style="left:951px;top:362.35px"><span class="tg">&lt;div</span> <span class="an">hidden</span><span class="tg">&gt;</span>                                       <span class="tg">&lt;/div&gt;</span><span style="color:#9aa0a6"> == <i>$0</i></span></div>
<div class="a" style="left:1045px;top:362.10px;width:329px;height:20.6px;background:#2f3e47;border:1px solid #50565b;box-shadow:0 1px 3px rgba(0,0,0,.4)"></div>
<div class="a" style="left:1046px;top:363.10px;width:2.4px;height:18.6px;background:#1d2226"></div>
<div class="a" style="left:1370.2px;top:363.10px;width:2.8px;height:18.6px;background:#1d2226"></div>
<div class="code" style="left:1049.6px;top:362.35px"><span class="tx"> h67GnLsMv4MWc84cYr2Ar6VZ7VrEc1VoGMFp3N</span></div>
<div class="code" style="left:936px;top:383.90px"><span class="tg">&lt;/div&gt;</span></div>
<div class="code" style="left:921px;top:405.45px"><span class="tg">&lt;/section&gt;</span></div>
<div class="code" style="left:906px;top:427.00px"><span class="tg">&lt;/body&gt;</span></div>
<div class="code" style="left:890px;top:448.55px"><span class="tg">&lt;/html&gt;</span></div>
</body></html>
